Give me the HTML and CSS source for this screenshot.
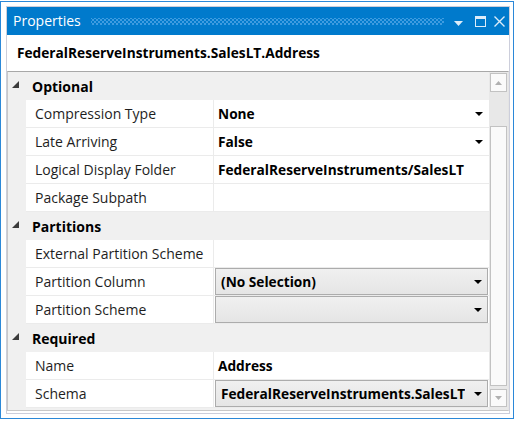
FILE: index.html
```html
<!DOCTYPE html>
<html lang="en">
<head>
    <meta charset="UTF-8">
    <title>Properties</title>
    <link rel="stylesheet" href="styles.css">
</head>
<body>
<div class="frame">
    <div class="panel">
        <div class="titlebar">
            <span class="title">Properties</span>
            <span class="grip"></span>
            <svg class="tb-drop" width="9" height="5" viewBox="0 0 9 5"><polygon points="0,0 9,0 4.5,5"/></svg>
            <svg class="tb-max" width="11" height="11" viewBox="0 0 11 11"><rect x="0.5" y="1.5" width="10" height="9" fill="none" stroke-width="1"/><rect x="0" y="0" width="11" height="3" stroke="none"/></svg>
            <svg class="tb-close" width="11" height="11" viewBox="0 0 11 11"><path d="M0.5 0.5 L10.5 10.5 M10.5 0.5 L0.5 10.5" fill="none" stroke-width="1.4"/></svg>
        </div>
        <div class="objname">FederalReserveInstruments.SalesLT.Address</div>
        <div class="grid">
            <div class="rows">
                <div class="cat"><span class="exp"><svg width="8" height="8" viewBox="0 0 8 8"><polygon points="7,0 7,7 0,7"/></svg></span><span>Optional</span></div>
                <div class="prop">
                    <span class="gutter"></span><span class="name">Compression Type</span>
                    <span class="value"><span class="txt">None</span><svg class="arrow" width="8" height="4" viewBox="0 0 8 4"><polygon points="0,0 8,0 4,4"/></svg></span>
                </div>
                <div class="prop">
                    <span class="gutter"></span><span class="name">Late Arriving</span>
                    <span class="value"><span class="txt">False</span><svg class="arrow" width="8" height="4" viewBox="0 0 8 4"><polygon points="0,0 8,0 4,4"/></svg></span>
                </div>
                <div class="prop">
                    <span class="gutter"></span><span class="name">Logical Display Folder</span>
                    <span class="value"><span class="txt">FederalReserveInstruments/SalesLT</span></span>
                </div>
                <div class="prop">
                    <span class="gutter"></span><span class="name">Package Subpath</span>
                    <span class="value"></span>
                </div>

                <div class="cat"><span class="exp"><svg width="8" height="8" viewBox="0 0 8 8"><polygon points="7,0 7,7 0,7"/></svg></span><span>Partitions</span></div>
                <div class="prop">
                    <span class="gutter"></span><span class="name">External Partition Scheme</span>
                    <span class="value"></span>
                </div>
                <div class="prop">
                    <span class="gutter"></span><span class="name">Partition Column</span>
                    <span class="value"><span class="combo"><span class="txt">(No Selection)</span><svg class="arrow" width="8" height="4" viewBox="0 0 8 4"><polygon points="0,0 8,0 4,4"/></svg></span></span>
                </div>
                <div class="prop">
                    <span class="gutter"></span><span class="name">Partition Scheme</span>
                    <span class="value"><span class="combo"><span class="txt"></span><svg class="arrow" width="8" height="4" viewBox="0 0 8 4"><polygon points="0,0 8,0 4,4"/></svg></span></span>
                </div>

                <div class="cat"><span class="exp"><svg width="8" height="8" viewBox="0 0 8 8"><polygon points="7,0 7,7 0,7"/></svg></span><span>Required</span></div>
                <div class="prop">
                    <span class="gutter"></span><span class="name">Name</span>
                    <span class="value"><span class="txt">Address</span></span>
                </div>
                <div class="prop">
                    <span class="gutter"></span><span class="name">Schema</span>
                    <span class="value"><span class="combo"><span class="txt">FederalReserveInstruments.SalesLT</span><svg class="arrow" width="8" height="4" viewBox="0 0 8 4"><polygon points="0,0 8,0 4,4"/></svg></span></span>
                </div>
                <div class="filler"></div>
            </div>
            <div class="vscroll">
                <div class="sb-btn"><svg width="7" height="4" viewBox="0 0 7 4"><polygon points="0,4 7,4 3.5,0"/></svg></div>
                <div class="sb-thumb"></div>
                <div class="sb-btn sb-down"><svg width="7" height="4" viewBox="0 0 7 4"><polygon points="0,0 7,0 3.5,4"/></svg></div>
            </div>
        </div>
    </div>
</div>
</body>
</html>
```

FILE: styles.css
```css
*{
    margin: 0;
    padding: 0;
    box-sizing: border-box;
}

body{
    width: 515px;
    height: 425px;
    overflow: hidden;
    background: #fff;
    font-family: "Open Sans", "Noto Sans", sans-serif;
    font-size: 14px;
    color: #1e1e1e;
}

.frame{
    margin-top: 1px;
    width: 514px;
    height: 418px;
    border: 1px solid #2b88d8;
    padding: 4px 3px 4px 5px;
}

.panel{
    height: 100%;
    border: 1px solid #cccedb;
    display: flex;
    flex-direction: column;
}

/* title bar */
.titlebar{
    height: 28px;
    background: #007acc;
    display: flex;
    align-items: center;
    padding: 0 4px 0 6px;
    color: #fff;
}
.titlebar .title{
    font-size: 14px;
    line-height: 28px;
    margin-top: -1px;
}
.titlebar .grip{
    flex: 1;
    height: 7px;
    margin: 0 10px 0 10px;
    background-image: radial-gradient(circle, #3f9ce0 45%, transparent 50%), radial-gradient(circle, #3f9ce0 45%, transparent 50%);
    background-size: 4px 4px;
    background-position: 0 0, 2px 2px;
}
.titlebar svg{
    fill: #dcecf9;
    stroke: #dcecf9;
}
.tb-drop{
    margin-top: 4px;
    stroke: none !important;
}
.tb-max{
    margin-left: 12px;
}
.tb-close{
    margin-left: 8px;
}

.objname{
    height: 36px;
    line-height: 36px;
    padding-left: 10px;
    font-weight: bold;
    font-size: 13.7px;
    color: #000;
}

/* property grid */
.grid{
    flex: 1;
    display: flex;
    border-top: 1px solid #a8a8a8;
    border-left: 1px solid #c8c8c8;
    border-bottom: 1px solid #c8c8c8;
    border-right: 1px solid #e4e4e4;
    margin-bottom: 2px;
}
.rows{
    flex: 1;
    display: flex;
    flex-direction: column;
    background: #fff;
}
.cat{
    height: 28px;
    display: flex;
    align-items: center;
    background: #f0f0f0;
    font-weight: bold;
    color: #000;
}
.cat .exp{
    width: 24px;
    display: flex;
    padding-left: 4px;
    margin-top: -3px;
}
.cat .exp svg{
    fill: #3c3c3c;
}
.prop{
    height: 28px;
    display: flex;
}
.prop .gutter{
    width: 18px;
    background: #f0f0f0;
}
.prop .name{
    width: 188px;
    padding-left: 9px;
    line-height: 27px;
    border-right: 1px solid #ebebeb;
    border-bottom: 1px solid #ebebeb;
    white-space: nowrap;
}
.prop .value{
    flex: 1;
    display: flex;
    align-items: center;
    border-bottom: 1px solid #ebebeb;
    font-weight: bold;
    font-size: 13.7px;
    color: #000;
    min-width: 0;
}
.value > .txt{
    flex: 1;
    padding-left: 4px;
    white-space: nowrap;
}
.arrow{
    flex: none;
    margin-right: 6px;
    fill: #000;
}
.combo{
    flex: 1;
    height: 27px;
    margin: 0 1px;
    display: flex;
    align-items: center;
    border: 1px solid #acacac;
    background: linear-gradient(#f0f0f0, #e5e5e5);
    min-width: 0;
    align-self: flex-start;
}
.combo .txt{
    flex: 1;
    padding-left: 5px;
    white-space: nowrap;
    overflow: hidden;
    margin-right: 9px;
}
.combo .arrow{
    margin-right: 5px;
}
.filler{
    flex: 1;
    background: #f0f0f0;
}

/* scrollbar */
.vscroll{
    width: 21px;
    background: #e8e8e8;
    display: flex;
    flex-direction: column;
    align-items: center;
    padding-top: 1px;
}
.sb-btn{
    width: 17px;
    height: 19px;
    border: 1px solid #c2c2c2;
    background: #fafafa;
    display: flex;
    align-items: center;
    justify-content: center;
}
.sb-btn svg{
    fill: #b0b0b0;
}
.sb-thumb{
    width: 17px;
    height: 260px;
    margin-top: 34px;
    border: 1px solid #c2c2c2;
    background: #fafafa;
}
.sb-down{
    margin-top: 3px;
    height: 18px;
}
```
